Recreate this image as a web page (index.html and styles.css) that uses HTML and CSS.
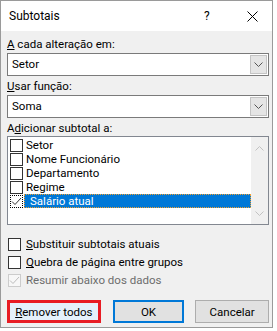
FILE: index.html
```html
<!DOCTYPE html>
<html lang="pt-br">
<head>
    <meta charset="UTF-8">
    <meta name="viewport" content="width=device-width, initial-scale=1.0">
    <title>Subtotais</title>
    <link rel="stylesheet" href="styles.css">
</head>
<body>
    <div class="janela">
        <div class="titulo">
            <span class="titulo-texto">Subtotais</span>
            <span class="ajuda">?</span>
            <svg class="fechar" width="11" height="11" viewBox="0 0 11 11">
                <path d="M0.5 0.5 L10.5 10.5 M10.5 0.5 L0.5 10.5" stroke="#000" stroke-width="1" fill="none"/>
            </svg>
        </div>

        <div class="corpo">
            <div class="rotulo"><u>A</u> cada alteração em:</div>
            <div class="combo">
                <span class="combo-texto">Setor</span>
                <div class="combo-seta">
                    <svg width="9" height="5" viewBox="0 0 9 5"><path d="M0.5 0.5 L4.5 4.5 L8.5 0.5" stroke="#555" fill="none"/></svg>
                </div>
            </div>

            <div class="rotulo"><u>U</u>sar função:</div>
            <div class="combo">
                <span class="combo-texto">Soma</span>
                <div class="combo-seta">
                    <svg width="9" height="5" viewBox="0 0 9 5"><path d="M0.5 0.5 L4.5 4.5 L8.5 0.5" stroke="#555" fill="none"/></svg>
                </div>
            </div>

            <div class="rotulo">A<u>d</u>icionar subtotal a:</div>
            <div class="lista">
                <div class="itens">
                    <div class="item"><span class="caixa"></span><span class="item-texto">Setor</span></div>
                    <div class="item"><span class="caixa"></span><span class="item-texto">Nome Funcionário</span></div>
                    <div class="item"><span class="caixa"></span><span class="item-texto">Departamento</span></div>
                    <div class="item"><span class="caixa"></span><span class="item-texto">Regime</span></div>
                    <div class="item">
                        <span class="caixa foco">
                            <svg width="11" height="11" viewBox="0 0 11 11"><path d="M1 5.5 L4 8.5 L10 2" stroke="#333" fill="none"/></svg>
                        </span>
                        <span class="item-texto selecionado">Salário atual</span>
                    </div>
                </div>
                <div class="rolagem">
                    <svg width="9" height="5" viewBox="0 0 9 5"><path d="M0.5 4.5 L4.5 0.5 L8.5 4.5" stroke="#c2c2c2" fill="none"/></svg>
                    <svg width="9" height="5" viewBox="0 0 9 5"><path d="M0.5 0.5 L4.5 4.5 L8.5 0.5" stroke="#c2c2c2" fill="none"/></svg>
                </div>
            </div>

            <div class="opcoes">
                <div class="opcao"><span class="caixa"></span><span><u>S</u>ubstituir subtotais atuais</span></div>
                <div class="opcao"><span class="caixa"></span><span><u>Q</u>uebra de página entre grupos</span></div>
                <div class="opcao desativada">
                    <span class="caixa">
                        <svg width="11" height="11" viewBox="0 0 11 11"><path d="M1 5.5 L4 8.5 L10 2" stroke="#bcbcbc" fill="none"/></svg>
                    </span>
                    <span>Resumir abaixo dos dados</span>
                </div>
            </div>

            <div class="botoes">
                <button class="botao remover"><u>R</u>emover todos</button>
                <button class="botao ok">OK</button>
                <button class="botao cancelar">Cancelar</button>
            </div>
        </div>
    </div>
</body>
</html>
```

FILE: styles.css
```css
* {
    box-sizing: border-box;
}

body {
    margin: 0;
    background: #ffffff;
    font-family: Roboto, "Liberation Sans", sans-serif;
    font-size: 11.5px;
    color: #000;
}

.janela {
    width: 273px;
    height: 328px;
    border: 1px solid #9a9a9a;
    background: #f0f0f0;
}

.titulo {
    height: 30px;
    background: #ffffff;
    display: flex;
    align-items: center;
    padding-left: 8px;
    font-size: 12px;
}

.titulo-texto {
    flex: 1;
}

.ajuda {
    width: 10px;
    margin-right: 33px;
}

.fechar {
    margin-right: 14px;
}

.corpo {
    padding: 0 3px 0 6px;
}

.rotulo {
    height: 16px;
    line-height: 16px;
    margin-top: 2px;
}

.rotulo:first-child {
    margin-top: 5px;
}

.combo {
    height: 23px;
    margin-top: 1px;
    background: #fff;
    border: 1px solid #7a7a7a;
    display: flex;
    align-items: stretch;
    padding: 1px;
}

.combo-texto {
    flex: 1;
    line-height: 19px;
    padding-left: 3px;
}

.combo-seta {
    width: 17px;
    background: #e5e5e5;
    border: 1px solid #c4c4c4;
    display: flex;
    align-items: center;
    justify-content: center;
}

.lista {
    height: 89px;
    background: #fff;
    border: 1px solid #828790;
    display: flex;
}

.itens {
    flex: 1;
    padding: 1px 0 0 2px;
}

.item {
    height: 14px;
    display: flex;
    align-items: center;
}

.caixa {
    width: 13px;
    height: 13px;
    border: 1px solid #333;
    background: #fff;
    display: flex;
    align-items: center;
    justify-content: center;
    flex: none;
}

.caixa.foco {
    border: 1px dotted #000;
}

.item-texto {
    flex: 1;
    height: 14px;
    line-height: 14px;
    padding-left: 3px;
}

.item-texto.selecionado {
    background: #0078d7;
    color: #fff;
    outline: 1px dotted #f0a030;
    outline-offset: -1px;
    margin-left: 1px;
    padding-left: 6px;
}

.rolagem {
    width: 17px;
    background: #f0f0f0;
    display: flex;
    flex-direction: column;
    justify-content: space-between;
    align-items: center;
    padding: 9px 0 8px;
}

.opcoes {
    margin-top: 10px;
}

.opcao {
    height: 18px;
    display: flex;
    align-items: center;
    gap: 5px;
    padding-left: 1px;
}

.desativada {
    color: #6d6d6d;
}

.desativada .caixa {
    border-color: #cccccc;
    background: #f7f7f7;
}

.botoes {
    margin-top: 11px;
    display: flex;
}

.botao {
    height: 23px;
    font-family: inherit;
    font-size: 11.5px;
    background: #e1e1e1;
    border: 1px solid #adadad;
    padding: 0;
    color: #000;
}

.remover {
    width: 94px;
    background: #e5f1fb;
    border: 3px solid #e81c24;
}

.ok {
    width: 72px;
    margin-left: 12px;
    border: 2px solid #0078d7;
}

.cancelar {
    width: 74px;
    margin-left: 11px;
}
```
